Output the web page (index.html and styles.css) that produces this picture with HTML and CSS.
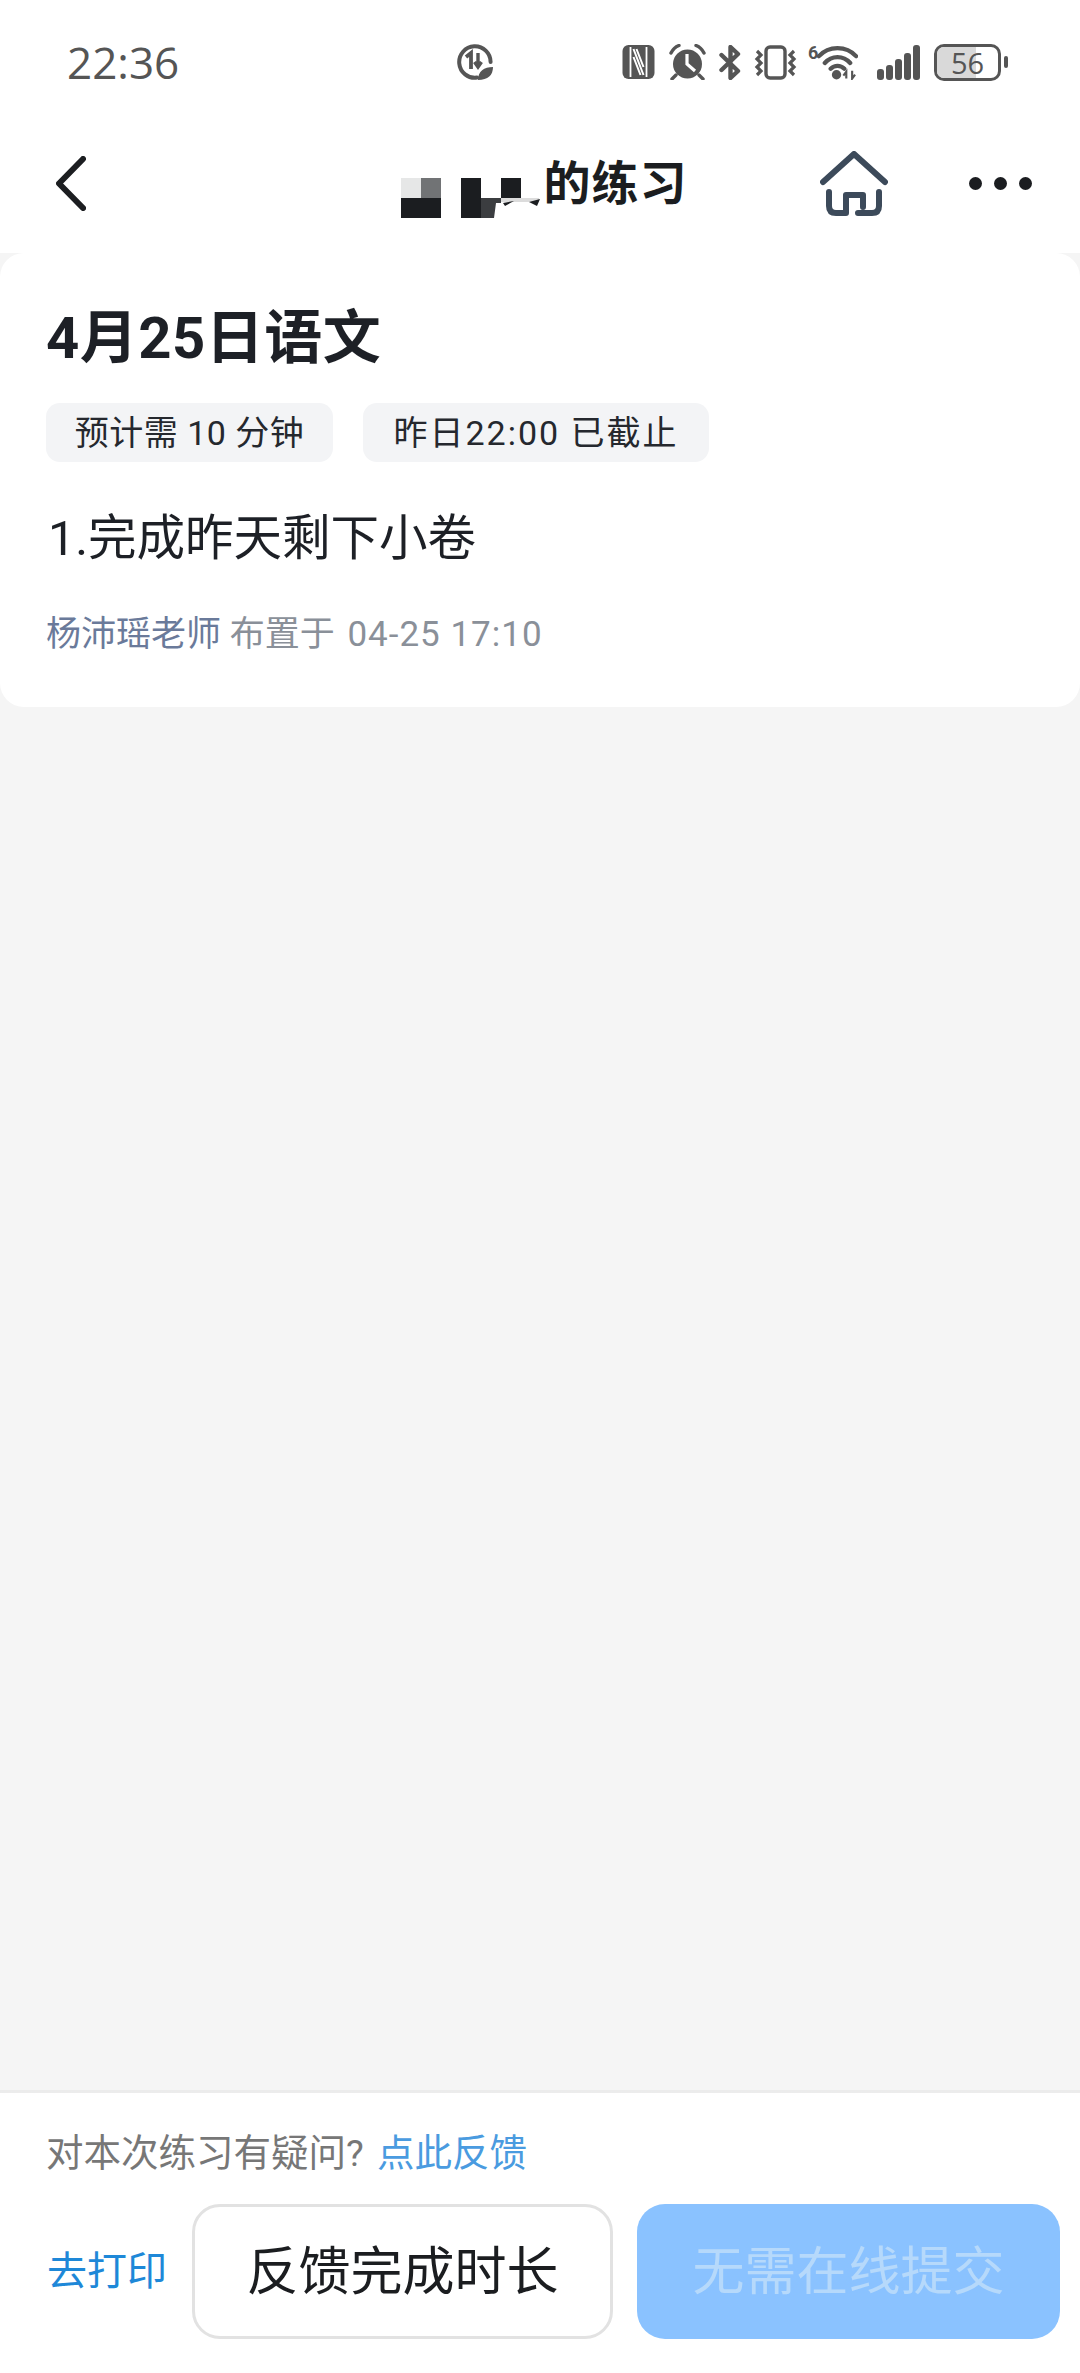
FILE: index.html
```html
<!DOCTYPE html>
<html lang="zh-CN">
<head>
  <meta charset="UTF-8">
  <meta name="viewport" content="width=device-width, initial-scale=1.0">
  <title>练习详情</title>
  <link rel="stylesheet" href="styles.css">
</head>
<body>
  <div class="pagina">
    <div class="estado">
      <span class="hora">22:36</span>
      <svg class="ic-datos" viewBox="0 0 36 36">
        <path d="M20 33.600A15.700 15.700 0 1 1 33.600 18" fill="none" stroke="#555" stroke-width="4" stroke-linecap="round"/>
        <path d="M9 13L14 9V25" fill="none" stroke="#555" stroke-width="3.800"/>
        <path d="M21 9V22M17.500 18L21 23L24.500 18" fill="none" stroke="#555" stroke-width="3.400"/>
        <path d="M21 36C21 27 27 23 36 23C36 31 31 36 21 36Z" fill="#555"/>
      </svg>
      <div class="iconos">
        <svg class="ic-nfc" viewBox="0 0 32 34">
          <rect width="32" height="34" rx="6" fill="#555"/>
          <path d="M8 2V32" fill="none" stroke="#fff" stroke-width="1.800"/>
          <path d="M24 2V32" fill="none" stroke="#fff" stroke-width="1.800"/>
          <path d="M11 4L21 30M11 12L18 30M14 4L21 22" fill="none" stroke="#fff" stroke-width="2"/>
        </svg>
        <svg class="ic-alarma" viewBox="0 0 37 36">
          <circle cx="18.500" cy="20" r="14.500" fill="#555"/>
          <path d="M18 10V20L26 27" fill="none" stroke="#fff" stroke-width="3.200"/>
          <path d="M2 9C4 5 6 3 10 1.500M35 9C33 5 31 3 27 1.500M7 31L3 35M30 31L34 35" fill="none" stroke="#555" stroke-width="3.400" stroke-linecap="round"/>
        </svg>
        <svg class="ic-blue" viewBox="0 0 22 35">
          <path d="M2.500 10L19 26L11.500 33V2L19 9L2.500 25" fill="none" stroke="#555" stroke-width="4.400" stroke-linejoin="round" stroke-linecap="round"/>
        </svg>
        <svg class="ic-vibra" viewBox="0 0 43 35">
          <rect x="12" y="2" width="19" height="31" rx="4" fill="none" stroke="#555" stroke-width="3.400"/>
          <path d="M3 6L7 10L3 14L7 18L3 22L7 26L3 30M40 6L36 10L40 14L36 18L40 22L36 26L40 30" fill="none" stroke="#555" stroke-width="3.200"/>
        </svg>
        <div class="wifi">
          <span class="wifi-num">6</span>
          <svg class="ic-wifi" viewBox="0 0 42 36">
            <path d="M2 12C12 1 30 1 40 12M8 19C15 11 27 11 34 19M14 25C18 21 24 21 28 25" fill="none" stroke="#555" stroke-width="4.400" stroke-linecap="round"/>
            <circle cx="20" cy="31" r="4.800" fill="#555"/>
            <path d="M30 35V28L27 32M36 27V35L39 31" fill="none" stroke="#555" stroke-width="2.200"/>
          </svg>
        </div>
        <div class="senal">
          <i class="b1"></i><i class="b2"></i><i class="b3"></i><i class="b4"></i><i class="b5"></i>
        </div>
        <div class="bateria">
          <div class="bat-caja">
            <div class="bat-nivel"></div>
            <span class="bat-num">56</span>
          </div>
          <div class="bat-punta"></div>
        </div>
      </div>
    </div>

    <div class="barra">
      <svg class="ic-volver" viewBox="0 0 30 55">
        <path d="M27 3L3 27.500L27 52" fill="none" stroke="#1c1e21" stroke-width="6" stroke-linecap="round" stroke-linejoin="round"/>
      </svg>
      <h1 class="titulo">
        <svg class="mosaico" viewBox="0 0 143 40">
          <rect x="0" y="0" width="20" height="20" fill="#e6e7e7"/>
          <rect x="20" y="0" width="20" height="20" fill="#717375"/>
          <rect x="0" y="20" width="40" height="20" fill="#1b1d20"/>
          <rect x="60" y="0" width="20" height="40" fill="#1b1d20"/>
          <path d="M80 20H100V25H95L93 40H80Z" fill="#3b3d40"/>
          <rect x="100" y="0" width="20" height="20" fill="#1b1d20"/>
          <rect x="100" y="20" width="38" height="4" fill="#dcdcdc"/>
          <path d="M102 25L113 23L104 28ZM128 24L139 21L136 28Z" fill="#1b1d20"/>
        </svg>
        <span>的练习</span>
      </h1>
      <div class="acciones">
        <svg class="ic-casa" viewBox="0 0 68 65">
          <path d="M3 31L34 3L65 31" fill="none" stroke="#3c4a5a" stroke-width="6" stroke-linecap="round" stroke-linejoin="round"/>
          <path d="M9 41V55Q9 62 16 62H26V44H43V56M38 62H52Q59 62 59 55V41" fill="none" stroke="#3c4a5a" stroke-width="6" stroke-linecap="round" stroke-linejoin="round"/>
        </svg>
        <div class="puntos"><i></i><i></i><i></i></div>
      </div>
    </div>

    <div class="tarjeta">
      <h2 class="tarea">4月25日语文</h2>
      <div class="etiquetas">
        <span class="etiqueta et-tiempo">预计需 10 分钟</span>
        <span class="etiqueta et-fecha">昨日22:00 已截止</span>
      </div>
      <p class="contenido">1.完成昨天剩下小卷</p>
      <p class="autor"><span class="profe">杨沛瑶老师</span> 布置于 <span class="fecha">04-25 17:10</span></p>
    </div>

    <div class="vacio"></div>

    <div class="pie">
      <p class="duda">对本次练习有疑问? <a class="enlace">点此反馈</a></p>
      <div class="botones">
        <a class="imprimir">去打印</a>
        <button class="btn btn-tiempo">反馈完成时长</button>
        <button class="btn btn-enviar">无需在线提交</button>
      </div>
    </div>
  </div>
</body>
</html>
```

FILE: styles.css
```css
* {
  box-sizing: border-box;
}
html, body {
  margin: 0;
  padding: 0;
}
body {
  font-family: Roboto, 'Noto Sans CJK SC', sans-serif;
  background: #f5f5f5;
}
svg {
  display: block;
  flex: none;
}
.pagina {
  display: flex;
  flex-direction: column;
  height: 2373px;
  overflow: hidden;
}

/* barra de estado */
.estado {
  display: flex;
  align-items: center;
  height: 84px;
  padding: 40px 72px 0 67px;
  background: white;
}
.hora {
  font-family: 'Open Sans', sans-serif;
  font-size: 44px;
  width: 111px;
  color: #555;
}
.ic-datos {
  width: 36px;
  height: 36px;
  margin-left: 279px;
}
.iconos {
  display: flex;
  align-items: center;
  margin-left: auto;
}
.ic-nfc {
  width: 33px;
  height: 34px;
}
.ic-alarma {
  width: 37px;
  height: 36px;
  margin-left: 14px;
}
.ic-blue {
  width: 22px;
  height: 35px;
  margin-left: 13px;
}
.ic-vibra {
  width: 43px;
  height: 35px;
  margin-left: 13px;
}
.wifi {
  display: flex;
  align-items: flex-start;
  margin-left: 11px;
}
.wifi-num {
  font-size: 18px;
  font-weight: bold;
  line-height: 18px;
  color: #555;
  width: 9px;
}
.ic-wifi {
  width: 41px;
  height: 36px;
}
.senal {
  display: flex;
  align-items: flex-end;
  gap: 2px;
  height: 35px;
  margin-left: 19px;
}
.senal i {
  display: block;
  width: 7px;
  background: #555;
  border-radius: 3px;
}
.senal .b1 { height: 11px; }
.senal .b2 { height: 15px; }
.senal .b3 { height: 21px; }
.senal .b4 { height: 27px; }
.senal .b5 { height: 35px; }
.bateria {
  display: flex;
  align-items: center;
  margin-left: 14px;
}
.bat-caja {
  position: relative;
  width: 67px;
  height: 37px;
  border: 3px solid #555;
  border-radius: 10px;
  display: flex;
  align-items: center;
  justify-content: center;
}
.bat-nivel {
  position: absolute;
  left: 0;
  top: 0;
  bottom: 0;
  width: 64%;
  background: #d9d9d9;
  border-radius: 7px 0 0 7px;
}
.bat-num {
  position: relative;
  font-family: 'Open Sans', sans-serif;
  font-size: 29px;
  line-height: 31px;
  color: #555;
}
.bat-punta {
  width: 4px;
  height: 12px;
  margin-left: 3px;
  background: #555;
  border-radius: 2px;
}

/* barra de navegacion */
.barra {
  display: grid;
  grid-template-columns: 1fr auto 1fr;
  align-items: center;
  height: 169px;
  padding: 30px 48px 0 56px;
  background: white;
}
.ic-volver {
  width: 30px;
  height: 55px;
}
.titulo {
  display: flex;
  align-items: center;
  margin: 0;
  font-size: 47px;
  font-weight: bold;
  line-height: 50px;
  letter-spacing: 1px;
  color: #1b1d20;
}
.titulo span {
  margin-top: 0;
}
.mosaico {
  width: 143px;
  height: 40px;
  margin: 28px 0 0 0;
}
.acciones {
  display: flex;
  align-items: center;
  justify-content: flex-end;
}
.ic-casa {
  width: 68px;
  height: 65px;
}
.puntos {
  display: flex;
  gap: 12px;
  margin-left: 81px;
}
.puntos i {
  display: block;
  width: 13px;
  height: 13px;
  background: #1b1d20;
  border-radius: 50%;
}

/* tarjeta */
.tarjeta {
  background: white;
  border-radius: 24px;
  height: 454px;
  padding: 53px 46px 0;
}
.tarea {
  margin: 0;
  font-size: 58px;
  font-weight: bold;
  line-height: 64px;
  letter-spacing: 0.5px;
  color: #1d2026;
}
.etiquetas {
  display: flex;
  gap: 30px;
  margin-top: 33px;
}
.etiqueta {
  display: flex;
  align-items: center;
  justify-content: center;
  height: 59px;
  padding-bottom: 4px;
  background: #f3f4f6;
  border-radius: 14px;
  font-size: 34px;
  color: #25282e;
}
.et-tiempo {
  width: 287px;
  letter-spacing: 0.5px;
}
.et-fecha {
  width: 346px;
  letter-spacing: 2px;
}
.contenido {
  margin: 47px 0 0 2px;
  font-size: 48.500px;
  line-height: 60px;
  color: #1d2026;
}
.autor {
  margin: 42px 0 0;
  font-size: 35px;
  line-height: 48px;
  color: #8a9099;
}
.profe {
  color: #6a7a9a;
}
.fecha {
  margin-left: 4px;
  letter-spacing: 1px;
}

.vacio {
  flex: 1;
}

/* pie */
.pie {
  height: 283px;
  padding-top: 34px;
  background: white;
  border-top: 3px solid #ececec;
}
.duda {
  margin: 0 0 0 46px;
  font-size: 37.500px;
  line-height: 52px;
  color: #777;
}
.enlace {
  margin-left: 4px;
  color: #4a9be0;
}
.botones {
  display: flex;
  align-items: center;
  margin-top: 25px;
  padding: 0 20px 0 47px;
}
.imprimir {
  width: 145px;
  margin-top: -8px;
  font-size: 40px;
  color: #1e88d8;
}
.btn {
  height: 135px;
  padding: 0 0 8px;
  border-radius: 28px;
  font-family: inherit;
  font-size: 52px;
}
.btn-tiempo {
  width: 421px;
  background: white;
  color: #1b1d20;
  border: 3px solid #e2e2e2;
}
.btn-enviar {
  width: 423px;
  margin-left: 24px;
  background: #8ac2ff;
  color: #b6d9fb;
  border: none;
}
```
